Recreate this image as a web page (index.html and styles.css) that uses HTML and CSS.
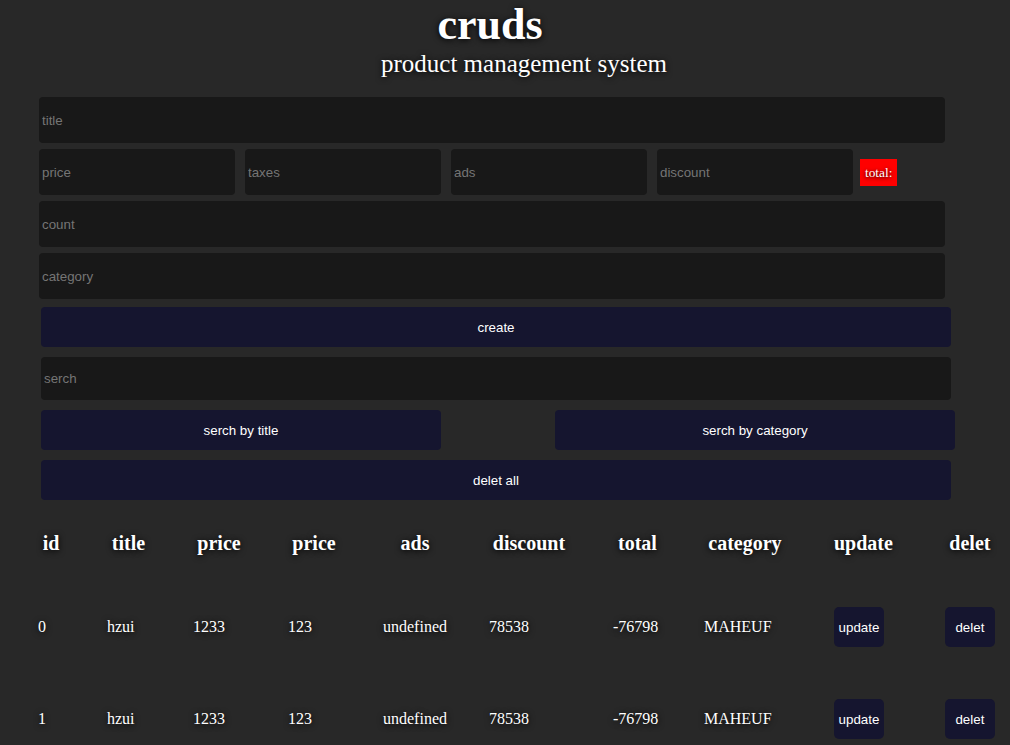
FILE: index.html
```html
<!DOCTYPE html>
<html lang="en">
<head>
<meta charset="utf-8">
<title>cruds</title>
<link rel="stylesheet" href="styles.css">
</head>
<body>
<div class="crud">
  <header class="head">
    <h1 class="brand">cruds</h1>
    <h3 class="subtitle">product management system</h3>
  </header>

  <div class="inputs">
    <input class="field field-wide" type="text" placeholder="title">
    <div class="price-row">
      <input class="field field-small" type="number" placeholder="price">
      <input class="field field-small" type="number" placeholder="taxes">
      <input class="field field-small" type="number" placeholder="ads">
      <input class="field field-small" type="number" placeholder="discount">
      <small class="total">total:</small>
    </div>
    <input class="field field-wide" type="number" placeholder="count">
    <input class="field field-wide" type="text" placeholder="category">
    <button class="btn btn-create">create</button>
  </div>

  <div class="output">
    <div class="search-block">
      <input class="field field-search" type="text" placeholder="serch">
      <div class="btn-search-row">
        <button class="btn btn-half">serch by title</button>
        <button class="btn btn-half">serch by category</button>
      </div>
    </div>
    <button class="btn btn-delete-all">delet all</button>

    <table class="products">
      <thead>
        <tr>
          <th>id</th>
          <th>title</th>
          <th>price</th>
          <th>price</th>
          <th>ads</th>
          <th>discount</th>
          <th>total</th>
          <th>category</th>
          <th>update</th>
          <th>delet</th>
        </tr>
      </thead>
      <tbody>
        <tr>
          <td>0</td>
          <td>hzui</td>
          <td>1233</td>
          <td>123</td>
          <td>undefined</td>
          <td>78538</td>
          <td>-76798</td>
          <td>MAHEUF</td>
          <td><button class="btn btn-cell">update</button></td>
          <td><button class="btn btn-cell">delet</button></td>
        </tr>
        <tr>
          <td>1</td>
          <td>hzui</td>
          <td>1233</td>
          <td>123</td>
          <td>undefined</td>
          <td>78538</td>
          <td>-76798</td>
          <td>MAHEUF</td>
          <td><button class="btn btn-cell">update</button></td>
          <td><button class="btn btn-cell">delet</button></td>
        </tr>
      </tbody>
    </table>
  </div>
</div>
</body>
</html>
```

FILE: styles.css
```css
* {
  box-sizing: border-box;
}

html, body {
  margin: 0;
  padding: 0;
  background: #282828;
}

body {
  color: #ffffff;
  font-family: "Liberation Serif", "Times New Roman", serif;
  font-size: 16px;
  text-shadow: 0 1px 6px #000000;
}

.crud {
  width: 1010px;
}

.head {
  text-align: center;
}

.brand {
  margin: 0;
  padding-right: 30px;
  font-size: 44px;
  line-height: 50px;
  font-weight: bold;
}

.subtitle {
  margin: 0;
  padding-left: 38px;
  font-size: 25px;
  line-height: 28px;
  font-weight: normal;
}

.inputs {
  padding-left: 39px;
  margin-top: 19px;
  display: flex;
  flex-direction: column;
  gap: 6px;
}

.field {
  display: block;
  border: none;
  outline: none;
  background: #181818;
  border-radius: 4px;
  color: #ffffff;
  font-family: "Liberation Sans", Arial, sans-serif;
  font-size: 13.33px;
  padding: 0 3px;
  text-shadow: none;
}

.field::placeholder {
  color: #757575;
}

.field::-webkit-outer-spin-button,
.field::-webkit-inner-spin-button {
  -webkit-appearance: none;
  margin: 0;
}

.field-wide {
  width: 906px;
  height: 46px;
}

.price-row {
  display: flex;
  align-items: center;
  gap: 10px;
}

.field-small {
  width: 196px;
  height: 46px;
}

.total {
  margin-left: -3px;
  background: #ff0000;
  color: #ffffff;
  font-family: "Liberation Serif", "Times New Roman", serif;
  font-size: 13.33px;
  line-height: 15px;
  padding: 6px 5px;
  height: 27px;
  text-shadow: 0 1px 4px #000000;
}

.btn {
  border: none;
  outline: none;
  background: #15152f;
  color: #ffffff;
  font-family: "Liberation Sans", Arial, sans-serif;
  font-size: 13.33px;
  border-radius: 4px;
  cursor: pointer;
  text-shadow: none;
}

.btn-create {
  margin-left: 2px;
  margin-top: 2px;
  width: 910px;
  height: 40px;
}

.output {
  padding-top: 10px;
}

.search-block {
  padding-left: 41px;
}

.field-search {
  width: 910px;
  height: 43px;
}

.btn-search-row {
  display: flex;
  gap: 114px;
  margin-top: 10px;
}

.btn-half {
  width: 400px;
  height: 40px;
}

.btn-delete-all {
  display: block;
  margin: 10px 0 0 41px;
  width: 910px;
  height: 40px;
}

.products {
  margin: 6px 0 0 38px;
  border-collapse: collapse;
  border-spacing: 0;
}

.products th,
.products td {
  box-sizing: content-box;
  padding: 26px 43px 26px 0;
  vertical-align: middle;
  white-space: nowrap;
}

.products th {
  font-size: 20px;
  line-height: 23px;
  font-weight: bold;
  text-align: center;
}

.products td {
  font-size: 16px;
  line-height: 18px;
  text-align: left;
}

.products th:nth-child(1) { width: 26px; }
.products th:nth-child(2) { width: 43px; }
.products th:nth-child(3) { width: 52px; }
.products th:nth-child(4) { width: 52px; }
.products th:nth-child(5) { width: 63px; }
.products th:nth-child(6) { width: 80px; }
.products th:nth-child(7) { width: 49px; }
.products th:nth-child(8) { width: 82px; }
.products th:nth-child(9) { width: 58px; }
.products th:nth-child(10) { width: 50px; }

.products th:nth-child(5),
.products td:nth-child(5) {
  padding-right: 42px;
}

.products th:nth-child(6),
.products td:nth-child(6) {
  padding-right: 44px;
}

.products th:nth-child(7),
.products td:nth-child(7) {
  padding-right: 42px;
}

.products th:nth-child(8),
.products td:nth-child(8) {
  padding-right: 48px;
}

.products th:nth-child(9),
.products td:nth-child(9) {
  padding-right: 52px;
}

.products th:nth-child(10),
.products td:nth-child(10) {
  padding-right: 0;
}

.btn-cell {
  width: 50px;
  height: 40px;
  border-radius: 5px;
  padding: 0;
}
```
